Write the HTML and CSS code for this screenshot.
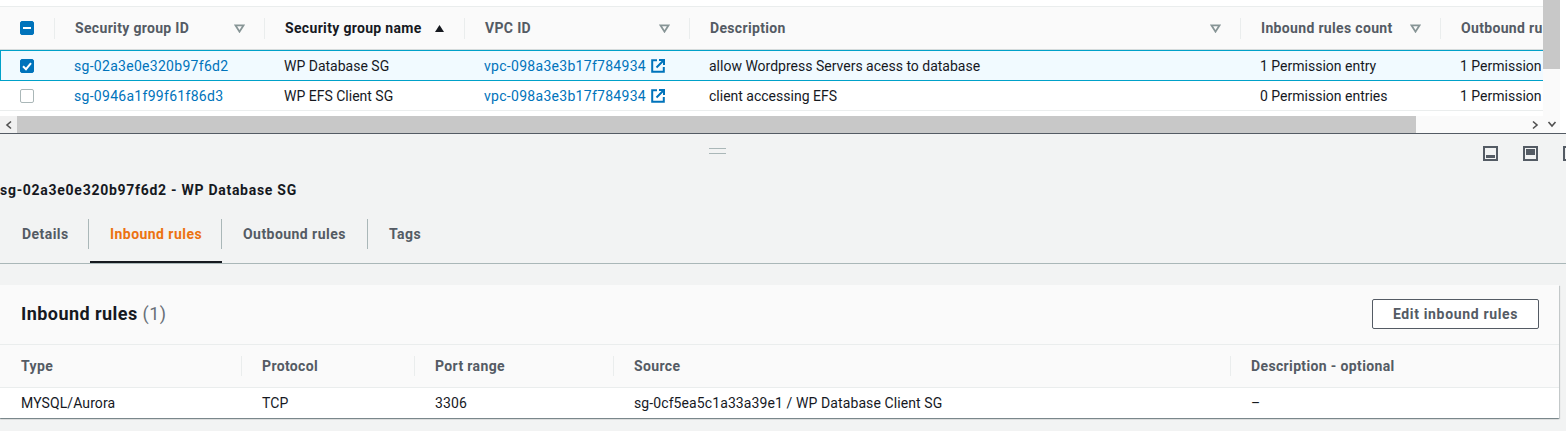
FILE: index.html
```html
<!DOCTYPE html>
<html lang="en">
<head>
    <meta charset="UTF-8">
    <link rel="stylesheet" href="styles.css">
    <title>Security Groups</title>
</head>
<body>
    <div class="topPane">
        <div class="tableWrap">
            <div class="sgTable">
                <div class="sgRow sgHead">
                    <div class="cell checkCell"><span class="check checkMixed"></span></div>
                    <div class="cell headCell"><span>Security group ID</span><svg class="sortIcon" viewBox="0 0 12 10"><path d="M1.5 1.5h9L6 8.5z" fill="none" stroke="#879596" stroke-width="2"/></svg></div>
                    <div class="cell headCell headActive"><span>Security group name</span><svg class="sortIcon" viewBox="0 0 12 10"><path d="M6 1l5 8H1z" fill="#16191f"/></svg></div>
                    <div class="cell headCell"><span>VPC ID</span><svg class="sortIcon" viewBox="0 0 12 10"><path d="M1.5 1.5h9L6 8.5z" fill="none" stroke="#879596" stroke-width="2"/></svg></div>
                    <div class="cell headCell"><span>Description</span><svg class="sortIcon" viewBox="0 0 12 10"><path d="M1.5 1.5h9L6 8.5z" fill="none" stroke="#879596" stroke-width="2"/></svg></div>
                    <div class="cell headCell"><span>Inbound rules count</span><svg class="sortIcon" viewBox="0 0 12 10"><path d="M1.5 1.5h9L6 8.5z" fill="none" stroke="#879596" stroke-width="2"/></svg></div>
                    <div class="cell headCell"><span>Outbound rules count</span></div>
                </div>
                <div class="sgRow sgBody sgSelected">
                    <div class="cell checkCell"><span class="check checkOn"><svg viewBox="0 0 14 14"><path d="M3 7.2l3 3 5-6" fill="none" stroke="#fff" stroke-width="2"/></svg></span></div>
                    <div class="cell"><a class="link">sg-02a3e0e320b97f6d2</a></div>
                    <div class="cell">WP Database SG</div>
                    <div class="cell"><a class="link">vpc-098a3e3b17f784934</a><svg class="extIcon" viewBox="0 0 14 14"><path d="M6 1.2H1.2v11.6h11.6V8" fill="none" stroke="#0073bb" stroke-width="2"/><path d="M5.5 8.5L12 2M8 1h5v5" fill="none" stroke="#0073bb" stroke-width="2"/></svg></div>
                    <div class="cell">allow Wordpress Servers acess to database</div>
                    <div class="cell">1 Permission entry</div>
                    <div class="cell">1 Permission entry</div>
                </div>
                <div class="sgRow sgBody">
                    <div class="cell checkCell"><span class="check"></span></div>
                    <div class="cell"><a class="link">sg-0946a1f99f61f86d3</a></div>
                    <div class="cell">WP EFS Client SG</div>
                    <div class="cell"><a class="link">vpc-098a3e3b17f784934</a><svg class="extIcon" viewBox="0 0 14 14"><path d="M6 1.2H1.2v11.6h11.6V8" fill="none" stroke="#0073bb" stroke-width="2"/><path d="M5.5 8.5L12 2M8 1h5v5" fill="none" stroke="#0073bb" stroke-width="2"/></svg></div>
                    <div class="cell">client accessing EFS</div>
                    <div class="cell">0 Permission entries</div>
                    <div class="cell">1 Permission entry</div>
                </div>
            </div>
            <div class="hScroll">
                <div class="scrollBtn"><svg viewBox="0 0 8 10"><path d="M6 1.5L2 5l4 3.5" fill="none" stroke="#505050" stroke-width="1.6"/></svg></div>
                <div class="hThumb"></div>
                <div class="hTrack"><svg viewBox="0 0 8 10"><path d="M2 1.5L6 5 2 8.5" fill="none" stroke="#505050" stroke-width="1.6"/></svg></div>
            </div>
        </div>
        <div class="vScroll">
            <div class="vThumb"></div>
            <svg viewBox="0 0 10 8"><path d="M1.5 2L5 6l3.5-4" fill="none" stroke="#505050" stroke-width="1.6"/></svg>
        </div>
    </div>

    <div class="splitBar">
        <div class="handle"></div>
        <div class="panelIcons">
            <svg viewBox="0 0 15 15"><rect x="1" y="1" width="13" height="13" fill="none" stroke="#545b64" stroke-width="2"/><rect x="3" y="9" width="9" height="3" fill="#545b64"/></svg>
            <svg viewBox="0 0 15 15"><rect x="1" y="1" width="13" height="13" fill="none" stroke="#545b64" stroke-width="2"/><rect x="3" y="3" width="9" height="6" fill="#545b64"/></svg>
            <svg viewBox="0 0 15 15"><rect x="1" y="1" width="13" height="13" fill="none" stroke="#545b64" stroke-width="2"/><rect x="3" y="3" width="3" height="9" fill="#545b64"/></svg>
        </div>
    </div>

    <h2 class="groupTitle">sg-02a3e0e320b97f6d2 - WP Database SG</h2>

    <div class="tabs">
        <div class="tab tabFirst"><span>Details</span></div>
        <div class="tab tabActive"><span>Inbound rules</span></div>
        <div class="tab tabOut"><span>Outbound rules</span></div>
        <div class="tab tabLast"><span>Tags</span></div>
    </div>

    <div class="rulesCard">
        <div class="cardHead">
            <h3>Inbound rules <span class="count">(1)</span></h3>
            <button class="editBtn">Edit inbound rules</button>
        </div>
        <div class="rulesRow rulesHead">
            <div class="ruleCell">Type</div>
            <div class="ruleCell">Protocol</div>
            <div class="ruleCell">Port range</div>
            <div class="ruleCell">Source</div>
            <div class="ruleCell">Description - optional</div>
        </div>
        <div class="rulesRow rulesBody">
            <div class="ruleCell">MYSQL/Aurora</div>
            <div class="ruleCell">TCP</div>
            <div class="ruleCell">3306</div>
            <div class="ruleCell">sg-0cf5ea5c1a33a39e1 / WP Database Client SG</div>
            <div class="ruleCell">–</div>
        </div>
    </div>
</body>
</html>
```

FILE: styles.css
```css
* {
    box-sizing: border-box;
}
html, body {
    margin: 0;
    height: 431px;
    overflow: hidden;
}
body {
    background: #f2f3f3;
    color: #16191f;
    font-family: Roboto, "Liberation Sans", sans-serif;
    font-size: 14px;
}

/* top table */
.topPane {
    display: flex;
    height: 134px;
    background: #fff;
    border-bottom: 1px solid #545b64;
}
.tableWrap {
    width: 1543px;
    padding-top: 6px;
    display: flex;
    flex-direction: column;
}
.sgTable {
    height: 110px;
    flex: none;
    overflow: hidden;
}
.sgRow {
    display: grid;
    grid-template-columns: 54px 210px 200px 225px 551px 200px 103px;
}
.sgHead {
    height: 45px;
    background: #fafafa;
    border-top: 1px solid #eaeded;
    border-bottom: 2px solid #d5dbdb;
    color: #545b64;
    font-weight: 700;
    letter-spacing: 0.33px;
}
.sgBody {
    height: 30px;
    border-bottom: 1px solid #eaeded;
}
.sgSelected {
    background: #f1faff;
    border-top: 1px solid #00a1c9;
    border-bottom: 1px solid #00a1c9;
    border-left: 1px solid #00a1c9;
    height: 31px;
    margin-top: -1px;
    grid-template-columns: 53px 210px 200px 225px 551px 200px 103px;
}
.cell {
    display: flex;
    align-items: center;
    padding-left: 20px;
    white-space: nowrap;
    overflow: hidden;
}
.headCell {
    padding-left: 21px;
    padding-right: 19px;
    justify-content: space-between;
    position: relative;
}
.headCell::before {
    content: "";
    position: absolute;
    left: 0;
    top: 11px;
    height: 21px;
    border-left: 1px solid #eaeded;
}
.sgSelected .checkCell {
    padding-left: 19px;
}
.headActive {
    color: #16191f;
}
.sortIcon {
    width: 11px;
    height: 9px;
    flex: none;
}
.check {
    display: block;
    width: 14px;
    height: 14px;
    border: 1px solid #aab7b8;
    border-radius: 2px;
    background: #fff;
}
.checkOn, .checkMixed {
    background: #0073bb;
    border-color: #0073bb;
    position: relative;
}
.checkOn svg {
    display: block;
    width: 14px;
    height: 14px;
    margin: -1px;
}
.checkMixed::after {
    content: "";
    position: absolute;
    left: 2px;
    top: 5px;
    width: 8px;
    height: 2px;
    background: #fff;
}
.link {
    color: #0073bb;
    letter-spacing: 0.29px;
}
.extIcon {
    width: 14px;
    height: 14px;
    margin-left: 5px;
    flex: none;
}

/* scrollbars */
.hScroll {
    display: flex;
    height: 17px;
    flex: none;
}
.scrollBtn {
    width: 17px;
    background: #f1f1f1;
    display: flex;
    align-items: center;
    justify-content: center;
}
.scrollBtn svg, .hTrack svg {
    width: 8px;
    height: 10px;
}
.hThumb {
    width: 1399px;
    background: #c8c8c8;
}
.hTrack {
    flex: 1;
    background: #fafafa;
    display: flex;
    align-items: center;
    justify-content: flex-end;
    padding-right: 4px;
}
.vScroll {
    width: 17px;
    display: flex;
    flex-direction: column;
    justify-content: space-between;
    align-items: center;
    padding-bottom: 5px;
    background: #fafafa;
}
.vScroll svg {
    width: 10px;
    height: 8px;
}
.vThumb {
    width: 17px;
    height: 69px;
    background: #c8c8c8;
}

/* split bar */
.splitBar {
    display: flex;
    height: 41px;
    padding-top: 12px;
    justify-content: space-between;
    overflow: hidden;
}
.handle {
    width: 17px;
    height: 6px;
    margin: 2px 0 0 709px;
    border-top: 1px solid #aab7b8;
    border-bottom: 1px solid #aab7b8;
}
.panelIcons {
    display: flex;
    gap: 25px;
    margin-right: -12px;
}
.panelIcons svg {
    width: 15px;
    height: 15px;
    flex: none;
}

/* details */
.groupTitle {
    margin: 0;
    height: 30px;
    font-size: 14px;
    line-height: 30px;
    font-weight: 700;
    letter-spacing: 0.72px;
    white-space: nowrap;
}
.tabs {
    display: flex;
    height: 59px;
    padding-top: 14px;
    border-bottom: 1px solid #aab7b8;
    color: #545b64;
    font-weight: 700;
    letter-spacing: 0.45px;
}
.tab {
    height: 44px;
}
.tab span {
    display: flex;
    align-items: center;
    height: 30px;
    padding: 0 21px;
    border-right: 1px solid #aab7b8;
    white-space: nowrap;
}
.tabFirst {
    width: 89px;
}
.tabFirst span {
    padding-left: 22px;
}
.tabActive {
    width: 132px;
    margin-left: 1px;
    color: #ec7211;
    border-bottom: 2px solid #16191f;
}
.tabActive span {
    padding-left: 20px;
}
.tabOut {
    width: 146px;
}
.tabLast span {
    border-right: 0;
}

/* inbound rules card */
.rulesCard {
    width: 1559px;
    margin-top: 21px;
    background: #fff;
    box-shadow: 0 1px 1px 0 rgba(0, 28, 36, 0.3), 1px 1px 1px 0 rgba(0, 28, 36, 0.15), -1px 1px 1px 0 rgba(0, 28, 36, 0.15);
}
.cardHead {
    height: 60px;
    background: #fafafa;
    border-bottom: 1px solid #eaeded;
    display: flex;
    align-items: center;
    justify-content: space-between;
    padding: 0 20px 2px 21px;
}
.cardHead h3 {
    margin: 0;
    font-size: 18px;
    font-weight: 700;
    letter-spacing: 0.45px;
}
.count {
    font-weight: 400;
    color: #687078;
}
.editBtn {
    width: 167px;
    height: 30px;
    border: 1px solid #545b64;
    border-radius: 2px;
    background: #fff;
    color: #545b64;
    font-family: inherit;
    font-size: 14px;
    font-weight: 700;
    letter-spacing: 0.66px;
}
.rulesRow {
    display: grid;
    grid-template-columns: 241px 173px 199px 617px 329px;
}
.rulesHead {
    height: 43px;
    background: #fafafa;
    border-bottom: 1px solid #eaeded;
    color: #545b64;
    font-weight: 700;
    letter-spacing: 0.36px;
}
.rulesBody {
    height: 30px;
    letter-spacing: 0.1px;
}
.ruleCell {
    display: flex;
    align-items: center;
    padding-left: 21px;
    white-space: nowrap;
}
.rulesHead .ruleCell {
    border-left: 1px solid #eaeded;
    margin: 11px 0;
    padding-left: 20px;
}
.rulesHead .ruleCell:first-child {
    border-left: 0;
    padding-left: 21px;
}
```
